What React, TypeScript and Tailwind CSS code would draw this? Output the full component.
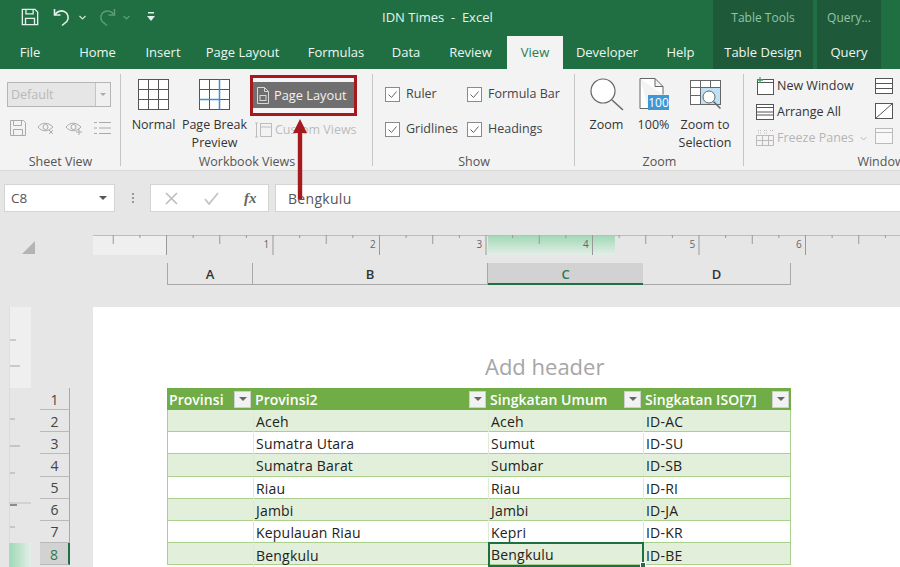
import type { ReactNode } from "react";

const tabs = [
  { label: "File", w: "w-[60px]" },
  { label: "Home", w: "w-[75px]" },
  { label: "Insert", w: "w-[56px]" },
  { label: "Page Layout", w: "w-[103px]" },
  { label: "Formulas", w: "w-[84px]" },
  { label: "Data", w: "w-[56px]" },
  { label: "Review", w: "w-[73px]" },
];

const rows = [
  ["Aceh", "Aceh", "ID-AC"],
  ["Sumatra Utara", "Sumut", "ID-SU"],
  ["Sumatra Barat", "Sumbar", "ID-SB"],
  ["Riau", "Riau", "ID-RI"],
  ["Jambi", "Jambi", "ID-JA"],
  ["Kepulauan Riau", "Kepri", "ID-KR"],
  ["Bengkulu", "Bengkulu", "ID-BE"],
];

function GridIcon({ pageBreak }: { pageBreak?: boolean }) {
  return (
    <svg width="33" height="33" viewBox="0 0 33 33" fill="none" stroke="#555" strokeWidth="1">
      <rect x="1.5" y="1.5" width="30" height="30" fill="#fff" />
      <path d="M11.5 1.5v30M21.5 1.5v30M1.5 11.5h30M1.5 21.5h30" />
      {pageBreak && <path d="M21.5 1.5v30M1.5 21.5h20" stroke="#3b8ed0" strokeWidth="1.5" />}
    </svg>
  );
}

function CheckBox({ label, w }: { label: string; w: string }) {
  return (
    <div className={`flex items-center gap-[6px] ${w}`}>
      <svg width="15" height="15" viewBox="0 0 15 15" fill="none" className="shrink-0">
        <rect x="0.5" y="0.5" width="14" height="14" fill="#fff" stroke="#8a8a8a" />
        <path d="M3.5 7.5l3 3 5-6" stroke="#666" />
      </svg>
      <span>{label}</span>
    </div>
  );
}

function Group({ w, label, children, sep = true }: { w: string; label: string; children: ReactNode; sep?: boolean }) {
  return (
    <div className={`${w} shrink-0 relative flex flex-col h-full`}>
      <div className="flex-1 min-h-0">{children}</div>
      <div className="text-center h-[16px] leading-[16px] text-[#555] whitespace-nowrap">{label}</div>
      {sep && <div className="absolute right-0 top-[5px] bottom-[4px] w-px bg-[#c6c6c6]" />}
    </div>
  );
}

function FilterBtn() {
  return (
    <span className="ml-auto mr-[2px] w-[17px] h-[17px] bg-[#f2f2f2] border border-[#cfcfcf] flex items-center justify-center shrink-0">
      <span className="w-0 h-0 border-x-[4px] border-x-transparent border-t-[4px] border-t-[#666]" />
    </span>
  );
}

export default function App() {
  return (
    <div
      className="relative w-[900px] h-[567px] overflow-hidden bg-[#e6e6e6] text-[12.5px] text-[#444] flex flex-col"
      style={{ fontFamily: '"Open Sans", "Noto Sans", sans-serif' }}
    >
      {/* Title bar */}
      <div className="h-[34px] bg-[#1f6f43] flex items-center text-white shrink-0">
        <div className="w-[382px] shrink-0 flex items-center pl-[21px]">
          <svg width="18" height="18" viewBox="0 0 20 20" fill="none" stroke="#e4f1ea" strokeWidth="1.5">
            <path d="M1.5 1.5h14l3 3v14h-17z" />
            <path d="M5.5 1.5v5h8v-5M5 18.5v-7h10v7" />
          </svg>
          <svg width="18" height="20" viewBox="0 0 18 20" fill="none" stroke="#e4f1ea" strokeWidth="1.6" className="ml-[14px]">
            <path d="M1.5 2v6h6" />
            <path d="M1.8 8c2-3.5 6-5 9.5-3.5 4 1.8 5 6.500 2.500 10L9 18.500" />
          </svg>
          <svg width="7" height="5" viewBox="0 0 7 5" fill="none" stroke="#cfe3d8" strokeWidth="1.2" className="ml-[8px]">
            <path d="M.5 1l3 3 3-3" />
          </svg>
          <svg width="17" height="20" viewBox="0 0 17 20" fill="none" stroke="#5f9c7c" strokeWidth="1.5" className="ml-[13px]">
            <path d="M15.5 2v6h-6" />
            <path d="M15.2 8c-2-3.5-6-5-9.5-3.5-4 1.8-5 6.500-2.500 10L8 18.500" />
          </svg>
          <svg width="7" height="5" viewBox="0 0 7 5" fill="none" stroke="#5f9c7c" strokeWidth="1.2" className="ml-[7px]">
            <path d="M.5 1l3 3 3-3" />
          </svg>
          <svg width="8" height="10" viewBox="0 0 8 10" fill="#e4f1ea" className="ml-[17px]">
            <rect x="1" y="0" width="6" height="1.5" />
            <path d="M0 4h8L4 9z" />
          </svg>
        </div>
        <div className="w-[331px] shrink-0 pt-[2px] text-[13px] whitespace-pre text-[#e6f2eb]">IDN Times  -  Excel</div>
        <div className="w-[100px] h-full pt-[2px] bg-[#1e5a3a] flex items-center justify-center text-[12px] text-[#93c4a8]">Table Tools</div>
        <div className="w-[64px] ml-[4px] h-full pt-[2px] bg-[#1e5a3a] flex items-center justify-center text-[12px] text-[#93c4a8]">Query...</div>
      </div>

      {/* Tabs */}
      <div className="h-[35px] bg-[#1f6f43] flex text-[13px] text-[#eef6f1] shrink-0">
        {tabs.map((t) => (
          <div key={t.label} className={`${t.w} pt-[3px] flex items-center justify-center whitespace-nowrap`}>
            {t.label}
          </div>
        ))}
        <div className="w-[56px] mt-[2px] pt-[1px] bg-[#f3f3f3] text-[#2d7a50] flex items-center justify-center">View</div>
        <div className="w-[88px] pt-[3px] flex items-center justify-center">Developer</div>
        <div className="w-[59px] pt-[3px] flex items-center justify-center mr-[3px]">Help</div>
        <div className="w-[100px] pt-[3px] bg-[#1e5a3a] flex items-center justify-center whitespace-nowrap">Table Design</div>
        <div className="w-[64px] pt-[3px] ml-[4px] bg-[#1e5a3a] flex items-center justify-center">Query</div>
      </div>

      {/* Ribbon */}
      <div className="h-[102px] bg-[#f3f3f3] border-b border-[#d8d8d8] flex shrink-0 leading-[18px]">
        <Group w="w-[121px]" label="Sheet View">
          <div className="pl-[7px] pt-[13px]">
            <div className="w-[104px] h-[25px] bg-[#e6e6e6] border border-[#b5b5b5] flex items-center text-[#b9b9b9]">
              <span className="flex-1 pl-[3px]">Default</span>
              <span className="w-[15px] h-full bg-[#f0f0f0] border-l border-[#c4c4c4] flex items-center justify-center">
                <span className="w-0 h-0 border-x-[3px] border-x-transparent border-t-[3px] border-t-[#aaa]" />
              </span>
            </div>
            <div className="flex items-center gap-[10px] mt-[12px] pl-[2px]">
              <svg width="18" height="18" viewBox="0 0 18 18" fill="none" stroke="#aaa">
                <path d="M1.5 1.5h13l2 2v13h-15z" />
                <path d="M4.5 1.5v5h8v-5M4.500 16.500v-6h9v6" />
              </svg>
              <svg width="18" height="16" viewBox="0 0 18 16" fill="none" stroke="#aaa">
                <path d="M1 7c4-5 10-5 15 0-5 5-11 5-15 0z" />
                <circle cx="8.5" cy="7" r="2.5" />
                <path d="M12 10l4 4M16 10l-4 4" />
              </svg>
              <svg width="18" height="16" viewBox="0 0 18 16" fill="none" stroke="#aaa">
                <path d="M1 7c4-5 10-5 15 0-5 5-11 5-15 0z" />
                <circle cx="8.5" cy="7" r="2.5" />
                <path d="M14 9v6M11 12h6" />
              </svg>
              <svg width="18" height="14" viewBox="0 0 18 14" fill="none" stroke="#aaa">
                <path d="M6 1.5h12M6 7h12M6 12.500h12M1 1.500h3M1 7h3M1 12.500h3" />
              </svg>
            </div>
          </div>
        </Group>

        <Group w="w-[252px]" label="Workbook Views">
          <div className="flex pt-[9px]">
            <div className="w-[61px] flex flex-col items-center text-[#333] pl-[4px]">
              <GridIcon />
              <span className="mt-[5px]">Normal</span>
            </div>
            <div className="w-[65px] flex flex-col items-center text-[#333] text-center">
              <GridIcon pageBreak />
              <span className="mt-[5px] leading-[18px] whitespace-nowrap">Page Break</span>
              <span className="leading-[18px]">Preview</span>
            </div>
            <div className="ml-[3px] w-[107px]">
              <div className="mt-[-3px] h-[41px] border-[3px] border-[#a5191f] pt-[4px] pb-[5px] bg-[#f5f5f5]">
                <div className="h-full bg-[#6f6f6f] text-[#f2f2f2] flex items-center pl-[3px] gap-[4px] text-[12.8px] whitespace-nowrap">
                  <svg width="14" height="17" viewBox="0 0 14 17" fill="none" stroke="#d8d8d8">
                    <path d="M1.5 .5h7l4 4v12h-11zM8.500 .5v4h4" />
                    <rect x="4" y="8.5" width="6" height="5" />
                  </svg>
                  Page Layout
                </div>
              </div>
              <div className="flex items-center gap-[2px] pl-[5px] mt-[5px] text-[#bcbcbc] whitespace-nowrap">
                <svg width="18" height="18" viewBox="0 0 18 18" fill="none" stroke="#bdbdbd">
                  <path d="M1.5 2v14M0 2h3M0 16h3" />
                  <rect x="5.5" y="2.5" width="11" height="13" />
                  <path d="M5.5 6h11" />
                </svg>
                Custom Views
              </div>
            </div>
          </div>
        </Group>

        <Group w="w-[202px]" label="Show">
          <div className="pl-[12px] pt-[16px] grid grid-cols-[82px_1fr] gap-y-[17px] text-[#444]">
            <CheckBox label="Ruler" w="" />
            <CheckBox label="Formula Bar" w="whitespace-nowrap" />
            <CheckBox label="Gridlines" w="" />
            <CheckBox label="Headings" w="" />
          </div>
        </Group>

        <Group w="w-[169px]" label="Zoom">
          <div className="flex pt-[9px] text-[#333]">
            <div className="w-[63px] flex flex-col items-center">
              <svg width="35" height="33" viewBox="0 0 35 33" fill="none" stroke="#666" strokeWidth="1.2">
                <circle cx="14" cy="13" r="12" fill="#fff" />
                <path d="M23 22l11 10" strokeWidth="1.5" />
              </svg>
              <span className="mt-[5px]">Zoom</span>
            </div>
            <div className="w-[31px] flex flex-col items-center">
              <svg width="30" height="33" viewBox="0 0 30 33" fill="none" className="shrink-0">
                <path d="M1 .5h15l8 8v8M1 .5v30h8M16 .5v8h8" stroke="#666" fill="#fff" />
                <rect x="9" y="17" width="21" height="15" fill="#3f97d6" />
                <text x="19.5" y="29" textAnchor="middle" fontSize="12" fill="#fff">100</text>
              </svg>
              <span className="mt-[5px]">100%</span>
            </div>
            <div className="w-[72px] flex flex-col items-center leading-[18px] whitespace-nowrap">
              <svg width="33" height="33" viewBox="0 0 33 33" fill="none" stroke="#666">
                <rect x="1.5" y="2.5" width="30" height="24" fill="#fff" />
                <rect x="11" y="9" width="20" height="17" fill="#bfe0f5" stroke="none" />
                <path d="M11.5 2.500v24M21.500 2.500v7M1.500 9.500h30M1.500 17.500h10" />
                <circle cx="20" cy="19" r="6" fill="#fff" />
                <path d="M24.5 23.500l7 7" strokeWidth="1.5" />
              </svg>
              <span className="mt-[5px]">Zoom to</span>
              <span>Selection</span>
            </div>
          </div>
        </Group>

        <Group w="w-[274px]" label="Window" sep={false}>
          <div className="flex pt-[8px] pl-[12px] text-[#333]">
            <div className="w-[119px] flex flex-col gap-[8px] whitespace-nowrap">
              <div className="flex items-center gap-[3px] h-[18px]">
                <svg width="18" height="18" viewBox="0 0 18 18" fill="none" stroke="#555">
                  <rect x="1.5" y="2.5" width="16" height="15" fill="#fff" />
                  <path d="M1.5 5.500h16" />
                  <path d="M4 0v6M1 3h6" stroke="#3fa45f" strokeWidth="1.3" />
                </svg>
                New Window
              </div>
              <div className="flex items-center gap-[3px] h-[18px]">
                <svg width="18" height="18" viewBox="0 0 18 18" fill="none" stroke="#555">
                  <rect x=".5" y="1.5" width="17" height="15" fill="#fff" />
                  <path d="M.5 4.500h17M.5 9h17M.5 12h17" />
                </svg>
                Arrange All
              </div>
              <div className="flex items-center gap-[3px] h-[18px] text-[#b5b5b5]">
                <svg width="18" height="18" viewBox="0 0 18 18" fill="none" stroke="#bbb">
                  <path d="M.5 6.500h17v10H.5zM6.500 6.500v10M12.500 6.500v10M.5 11.500h17" />
                  <path d="M2 1.500h3M8 1.500h3M2 4h3M8 4h3M14 1.500h3" strokeDasharray="1 1" />
                </svg>
                Freeze Panes
                <svg width="7" height="5" viewBox="0 0 7 5" fill="none" stroke="#bbb" className="ml-[3px]">
                  <path d="M.5 1l3 3 3-3" />
                </svg>
              </div>
            </div>
            <div className="flex flex-col gap-[9px] pt-[1px]">
              <svg width="18" height="16" viewBox="0 0 18 16" fill="none" stroke="#555">
                <rect x=".5" y=".5" width="17" height="15" fill="#fff" />
                <path d="M.5 5.500h17M.5 10.500h17" />
              </svg>
              <svg width="18" height="16" viewBox="0 0 18 16" fill="none" stroke="#555">
                <rect x=".5" y=".5" width="17" height="15" fill="#fff" />
                <path d="M.5 15.500l17-15" />
              </svg>
              <svg width="18" height="16" viewBox="0 0 18 16" fill="none" stroke="#bbb">
                <rect x=".5" y=".5" width="17" height="15" fill="#f8f8f8" />
                <path d="M.5 4.500h17" />
              </svg>
            </div>
          </div>
        </Group>
      </div>

      {/* Formula bar */}
      <div className="mt-[13px] h-[28px] flex items-stretch shrink-0">
        <div className="ml-[4px] w-[111px] bg-white border border-[#d4d4d4] flex items-center pl-[6px] text-[13.5px] text-[#555]">
          <span className="flex-1">C8</span>
          <span className="mr-[7px] w-0 h-0 border-x-[4px] border-x-transparent border-t-[4px] border-t-[#555]" />
        </div>
        <div className="w-[35px] flex flex-col items-center justify-center gap-[2px]">
          <span className="w-[2px] h-[2px] bg-[#999]" />
          <span className="w-[2px] h-[2px] bg-[#999]" />
          <span className="w-[2px] h-[2px] bg-[#999]" />
        </div>
        <div className="w-[119px] bg-white border border-[#d4d4d4] flex items-center">
          <svg width="13" height="13" viewBox="0 0 13 13" stroke="#bdbdbd" strokeWidth="1.6" fill="none" className="ml-[14px]">
            <path d="M1 1l11 11M12 1L1 12" />
          </svg>
          <svg width="15" height="13" viewBox="0 0 15 13" stroke="#c4c4c4" strokeWidth="1.8" fill="none" className="ml-[26px]">
            <path d="M1 7l4 5L14 1" />
          </svg>
          <span className="ml-[25px] text-[#666] italic font-bold text-[15px]" style={{ fontFamily: '"Liberation Serif", serif' }}>
            fx
          </span>
        </div>
        <div className="ml-[6px] flex-1 bg-white border-y border-l border-[#d4d4d4] flex items-center pl-[12px] text-[14px] text-[#555] tracking-[0.3px]">
          Bengkulu
        </div>
      </div>

      {/* Ruler */}
      <div className="mt-[23px] h-[20px] flex shrink-0">
        <div className="w-[93px] shrink-0 flex items-end justify-end pr-[58px]">
          <span className="w-0 h-0 border-l-[13px] border-l-transparent border-b-[13px] border-b-[#b4b4b4] mb-px" />
        </div>
        <svg width="807" height="20" viewBox="0 0 807 20" fill="none">
          <defs>
            <linearGradient id="sel" x1="0" y1="0" x2="0" y2="1">
              <stop offset="0" stopColor="#9ed8b4" />
              <stop offset="1" stopColor="#e4eee8" />
            </linearGradient>
          </defs>
          <rect x="0" y="0" width="74" height="20" fill="#efefef" />
          <rect x="395" y="0" width="127" height="20" fill="url(#sel)" />
          <path d="M0 .5h807" stroke="#bdbdbd" />
          {Array.from({ length: 30 }, (_, i) => (
            <path key={i} d={`M${20.25 + i * 26.625} 0v${i % 4 === 2 ? 20 : i % 2 === 0 ? 9 : 3}`} stroke="#999" />
          ))}
          {[1, 2, 3, 4, 5, 6].map((n) => (
            <text key={n} x={64 + (n - 1) * 106.5 + 106.5} y="13" fontSize="10" fill="#666" fontFamily="Open Sans">
              {n}
            </text>
          ))}
        </svg>
      </div>

      {/* Column headings */}
      <div className="mt-[8px] ml-[167px] h-[22px] flex text-[13px] text-[#333] font-semibold shrink-0 leading-[22px] text-center">
        <div className="w-[86px] border-l border-r border-b border-[#a8a8a8]">A</div>
        <div className="w-[235px] border-r border-b border-[#a8a8a8]">B</div>
        <div className="w-[155px] bg-[#d2d2d2] border-b-2 border-[#1f6f43] text-[#2d7a50]">C</div>
        <div className="w-[148px] border-r border-b border-[#a8a8a8]">D</div>
      </div>

      {/* Sheet */}
      <div className="mt-[22px] flex-1 min-h-0 flex">
        <div className="w-[93px] shrink-0 flex">
          <div className="ml-[9px] w-[22px] flex flex-col shrink-0">
            <svg width="22" height="260" viewBox="0 0 22 260" fill="none">
              <defs>
                <linearGradient id="selv" x1="0" y1="0" x2="1" y2="0">
                  <stop offset="0" stopColor="#9ed8b4" />
                  <stop offset="1" stopColor="#e4eee8" />
                </linearGradient>
              </defs>
              <rect x="0" y="0" width="22" height="81" fill="#efefef" />
              <rect x="0" y="236" width="22" height="24" fill="url(#selv)" />
              <path d="M0 0v260" stroke="#cfcfcf" />
              <path d="M1 33h6M1 59h10M1 112h5M1 139h10M1 166h5M1 220h5" stroke="#a5a5a5" />
              <path d="M1 198h7" stroke="#333" />
              <path d="M0 196h22" stroke="#bdbdbd" />
            </svg>
          </div>
          <div className="ml-[9px] w-[30px] pt-[81px] shrink-0 text-[14px] text-[#444]">
            {[1, 2, 3, 4, 5, 6, 7, 8].map((n) => (
              <div
                key={n}
                className={`h-[22.15px] pt-px flex items-center justify-center border-b border-[#b9b9b9] ${
                  n === 8 ? "bg-[#d2d2d2] border-r-2 border-r-[#1f6f43] text-[#2d7a50]" : "border-r border-r-[#a8a8a8]"
                }`}
              >
                {n}
              </div>
            ))}
          </div>
        </div>

        <div className="flex-1 bg-white flex flex-col">
          <div className="h-[81px] shrink-0 pl-[392px] pt-[42px] text-[22px] leading-[34px] text-[#a6a6a6]">Add header</div>
          <div className="ml-[74px] w-[624px] text-[14px] text-[#222] tracking-[0.2px]">
            <div className="h-[22.15px] grid grid-cols-[86px_235px_155px_148px] bg-[#70ad47] text-white font-semibold tracking-[0.05px]">
              {["Provinsi", "Provinsi2", "Singkatan Umum", "Singkatan ISO[7]"].map((h) => (
                <div key={h} className="flex items-center pl-[2px] whitespace-nowrap">
                  {h}
                  <FilterBtn />
                </div>
              ))}
            </div>
            {rows.map((r, i) => (
              <div
                key={r[0]}
                className={`h-[22.15px] pt-px grid grid-cols-[86px_235px_155px_148px] border-b border-x border-[#a9d08e] ${
                  i % 2 === 0 ? "bg-[#e2efda]" : "bg-white"
                }`}
              >
                <div className="border-r border-[#dfe9d8]" />
                <div className="pl-[2px] flex items-center whitespace-nowrap border-r border-[#dfe9d8]">{r[0]}</div>
                {i === 6 ? (
                  <div className="relative pl-[1px] flex items-center border-2 border-[#1f6f43] -ml-px mt-[-2px]">
                    {r[1]}
                    <span className="absolute right-[-4px] bottom-[-3px] w-[6px] h-[6px] bg-[#1f6f43] border border-white" />
                  </div>
                ) : (
                  <div className="pl-[2px] flex items-center border-r border-[#dfe9d8]">{r[1]}</div>
                )}
                <div className="pl-[2px] flex items-center">{r[2]}</div>
              </div>
            ))}
          </div>
        </div>
      </div>

      {/* Red arrow over the ribbon */}
      <svg width="16" height="80" viewBox="0 0 16 80" className="absolute left-[292px] top-[119px]">
        <path d="M8 0l7 14h-4.800v66H5.800V14H1z" fill="#a5191f" />
      </svg>
    </div>
  );
}
